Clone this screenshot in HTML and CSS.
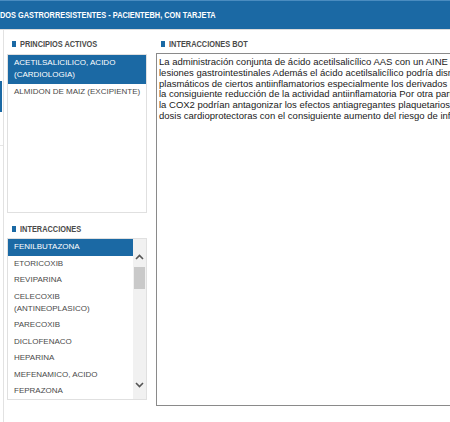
FILE: index.html
```html
<!DOCTYPE html>
<html lang="es">
<head>
<meta charset="utf-8">
<title>Interacciones</title>
<link rel="stylesheet" href="styles.css">
</head>
<body>
<header class="header"><span class="narrow">DOS GASTRORRESISTENTES - PACIENTEBH, CON TARJETA</span></header>
<div class="main">
  <div class="rail"><div class="rail-tab"></div><div class="rail-sep"></div></div>
  <div class="left">
    <h2 class="title"><span class="marker"></span><span class="narrow">PRINCIPIOS ACTIVOS</span></h2>
    <div class="list list-pa">
      <div class="item selected">ACETILSALICILICO, ACIDO<br>(CARDIOLOGIA)</div>
      <div class="item">ALMIDON DE MAIZ (EXCIPIENTE)</div>
    </div>
    <h2 class="title title-int"><span class="marker"></span><span class="narrow">INTERACCIONES</span></h2>
    <div class="list list-int">
      <div class="items">
        <div class="item selected">FENILBUTAZONA</div>
        <div class="item">ETORICOXIB</div>
        <div class="item">REVIPARINA</div>
        <div class="item">CELECOXIB<br>(ANTINEOPLASICO)</div>
        <div class="item">PARECOXIB</div>
        <div class="item">DICLOFENACO</div>
        <div class="item">HEPARINA</div>
        <div class="item">MEFENAMICO, ACIDO</div>
        <div class="item">FEPRAZONA</div>
      </div>
      <div class="scrollbar">
        <svg class="chev chev-up" width="9" height="6" viewBox="0 0 9 6"><path d="M1 5 L4.5 1.5 L8 5" fill="none" stroke="#555" stroke-width="1.6"/></svg>
        <div class="thumb"></div>
        <div class="track"></div>
        <svg class="chev chev-down" width="9" height="6" viewBox="0 0 9 6"><path d="M1 1 L4.5 4.5 L8 1" fill="none" stroke="#555" stroke-width="1.6"/></svg>
      </div>
    </div>
  </div>
  <div class="right">
    <h2 class="title"><span class="marker"></span><span class="narrow">INTERACCIONES BOT</span></h2>
    <div class="textbox">La administración conjunta de ácido acetilsalicílico AAS con un AINE puede aumentar el riesgo de<br>lesiones gastrointestinales Además el ácido acetilsalicílico podría disminuir los niveles<br>plasmáticos de ciertos antiinflamatorios especialmente los derivados del ácido propiónico con<br>la consiguiente reducción de la actividad antiinflamatoria Por otra parte los AINE inhibidores de<br>la COX2 podrían antagonizar los efectos antiagregantes plaquetarios del ácido acetilsalicílico a<br>dosis cardioprotectoras con el consiguiente aumento del riesgo de infarto</div>
  </div>
</div>
</body>
</html>
```
FILE: styles.css
```css
html, body {
  margin: 0;
  padding: 0;
  background: #ffffff;
}
body {
  width: 450px;
  height: 422px;
  overflow: hidden;
  font-family: "Liberation Sans", Arial, sans-serif;
}
.narrow {
  display: inline-block;
  transform: scaleX(0.82);
  transform-origin: left center;
  white-space: nowrap;
}
.header {
  height: 29px;
  line-height: 29px;
  background: #1b69a4;
  border-top: 1px solid #4a8cc0;
  box-sizing: border-box;
  color: #ffffff;
  font-weight: bold;
  font-size: 9px;
  white-space: nowrap;
  padding-left: 0;
}
.main {
  display: flex;
  border-top: 1px solid #dcdcdc;
  height: 392px;
}
.rail {
  width: 3px;
  border-right: 1px solid #e2e2e2;
  flex: none;
  display: flex;
  flex-direction: column;
}
.rail-tab {
  margin-top: 51px;
  height: 31px;
  width: 2px;
  background: #1b69a4;
}
.rail-sep {
  margin-top: 33px;
  height: 1px;
  background: #e6e6e6;
}
.left {
  width: 146px;
  flex: none;
  padding: 8px 0 0 3px;
  display: flex;
  flex-direction: column;
}
.title {
  margin: 0 0 4px 0;
  padding-left: 5px;
  height: 12px;
  line-height: 12px;
  display: flex;
  align-items: center;
  gap: 4px;
  font-weight: bold;
  font-size: 9px;
  color: #4a4a4a;
  white-space: nowrap;
}
.marker {
  width: 4px;
  height: 6px;
  background: #1b69a4;
  flex: none;
}
.title-int {
  margin-top: 10px;
  margin-bottom: 3px;
}
.list {
  width: 140px;
  box-sizing: border-box;
  border: 1px solid #e0e0e0;
  background: #ffffff;
  font-size: 8px;
  color: #4a4a4a;
}
.list-pa {
  height: 159px;
}
.list-int {
  height: 162px;
  display: flex;
  overflow: hidden;
}
.items {
  flex: 1;
  min-width: 0;
}
.item {
  padding: 2.25px 6px;
  line-height: 12px;
  white-space: nowrap;
}
.item.selected {
  background: #1b69a4;
  color: #ffffff;
}
.scrollbar {
  width: 13px;
  flex: none;
  background: #f1f1f1;
  display: flex;
  flex-direction: column;
  align-items: center;
  padding: 15px 0 11px 0;
  box-sizing: border-box;
}
.chev {
  flex: none;
  display: block;
}
.thumb {
  margin-top: 7px;
  width: 11px;
  height: 22px;
  background: #c9c9c9;
  flex: none;
}
.track {
  flex: 1;
}
.right {
  flex: 1;
  padding: 8px 0 0 3px;
  display: flex;
  flex-direction: column;
  min-width: 0;
}
.right .title {
  margin-bottom: 3px;
}
.textbox {
  width: 420px;
  height: 353px;
  box-sizing: border-box;
  border: 1px solid #8a8a8a;
  padding: 3px 2px;
  font-size: 9.5px;
  line-height: 10.8px;
  color: #1a1a1a;
  white-space: nowrap;
  overflow: hidden;
}
```
